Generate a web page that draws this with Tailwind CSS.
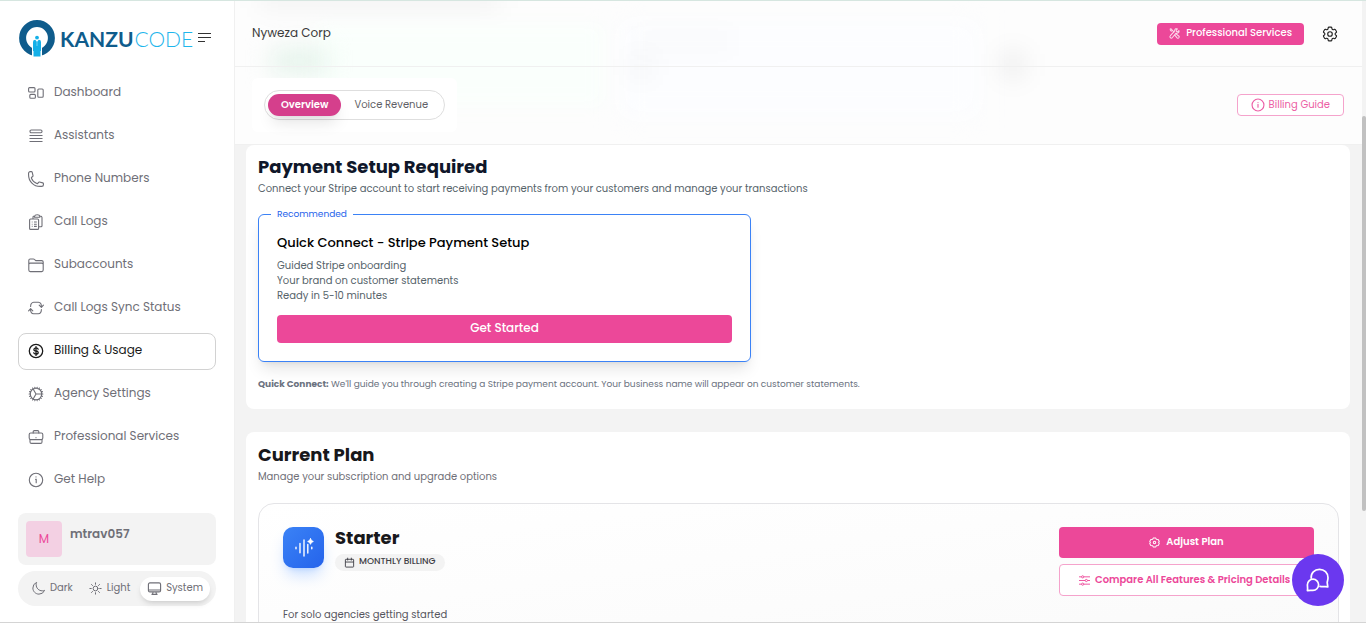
<!DOCTYPE html>
<html lang="en">
<head>
  <meta charset="UTF-8" />
  <meta name="viewport" content="width=device-width, initial-scale=1.0" />
  <title>Billing & Usage - Kanzu Code</title>
  <script src="https://cdn.jsdelivr.net/npm/@tailwindcss/browser@4"></script>
</head>
<body class="h-screen flex overflow-hidden bg-[#f3f3f3] border-t border-t-[#d6e6e0] border-b border-b-[#d4d4d4] font-[Poppins,Inter,sans-serif] text-[#6f6f77]">

  <!-- Sidebar -->
  <aside class="w-[235px] shrink-0 bg-white border-r border-[#f0f0f0] px-[18px] pt-[18px] pb-4 flex flex-col">
    <div class="flex items-center h-[38px] mb-[18px]">
      <a href="#" class="flex items-center" aria-label="Kanzu Code">
        <svg class="w-[38px] h-[38px]" viewBox="0 0 38 38">
          <circle cx="19" cy="19" r="14.4" fill="none" stroke="#0f5c8c" stroke-width="7" />
          <path d="M14 24h10v14H14z" fill="#fff" />
          <circle cx="19" cy="18.6" r="1.9" fill="#14b0e8" />
          <path d="M15 23q0-2.2 2.3-2.2L19 23l1.700-2.200Q23 20.800 23 23v9h-.5v5.500h-7v-5.500H15z" fill="#14b0e8" />
          <path d="M19 23v4" stroke="#fff" stroke-width=".4" />
        </svg>
        <span class="ml-1 font-[Lato,sans-serif] text-[21px] leading-none text-[#0f5c8c] font-bold">KANZU</span>
        <span class="ml-px font-[Lato,sans-serif] text-[21px] leading-none text-[#1fb6ec] font-light">CODE</span>
      </a>
      <button class="ml-auto mr-1 text-[#333]" aria-label="Collapse menu">
        <svg class="w-[14px] h-[12px]" viewBox="0 0 14 12" fill="none" stroke="currentColor" stroke-width="1.200"><path d="M0 1.500h13M0 5.500h13M0 9.500h7" /></svg>
      </button>
    </div>

    <nav class="flex flex-col gap-[6px] text-xs">
      <a href="#" class="h-[37px] flex items-center gap-[10px] px-[10px] pb-[2px]">
        <svg class="w-4 h-4" viewBox="0 0 16 16" fill="none" stroke="currentColor" stroke-width="1.100"><rect x=".6" y="2.600" width="6.400" height="4.400" rx="1" /><rect x="1.800" y="9.400" width="5.600" height="3.800" rx="1" /><rect x="9.800" y="4" width="5.400" height="8.200" rx="1" /></svg>
        <span class="pb-px">Dashboard</span>
      </a>
      <a href="#" class="h-[37px] flex items-center gap-[10px] px-[10px] pb-[2px]">
        <svg class="w-4 h-4" viewBox="0 0 16 16" fill="none" stroke="currentColor" stroke-width="1.100"><rect x="2" y="2" width="12" height="2.800" rx="1.200" /><path d="M1.500 7.500h13M1.500 10.500h13M1.500 13.500h13" /></svg>
        <span class="pb-px">Assistants</span>
      </a>
      <a href="#" class="h-[37px] flex items-center gap-[10px] px-[10px] pb-[2px]">
        <svg class="w-4 h-4" viewBox="1.500 1.500 21 21" fill="none" stroke="currentColor" stroke-width="1.500" stroke-linejoin="round"><path d="M2.250 6.750c0 8.284 6.716 15 15 15h2.250a2.250 2.250 0 0 0 2.250-2.250v-1.372c0-.516-.351-.966-.852-1.091l-4.423-1.106c-.44-.11-.902.055-1.173.417l-.97 1.293c-.282.376-.769.542-1.210.38a12.035 12.035 0 0 1-7.143-7.143c-.162-.441.004-.928.380-1.210l1.293-.97c.363-.271.527-.734.417-1.173L6.963 3.102a1.125 1.125 0 0 0-1.091-.852H4.500A2.250 2.250 0 0 0 2.250 4.500z" /></svg>
        <span class="pb-px">Phone Numbers</span>
      </a>
      <a href="#" class="h-[37px] flex items-center gap-[10px] px-[10px] pb-[2px]">
        <svg class="w-4 h-4" viewBox="0 0 16 16" fill="none" stroke="currentColor" stroke-width="1.100" stroke-linejoin="round"><rect x="1.600" y="5" width="9" height="10.400" rx="1" /><path d="M5 5V3.200Q5 2 6.200 2M12 2q2 0 2 1.400v8.400q0 1-1 1h-2.400M6.500 3.200V2.500Q6.800.7 9.200.7t2.600 1.800v.7zM3.800 8h.7M3.800 10.200h.7M3.800 12.400h.7M6 8h2.800M6 10.200h2.800M6 12.400h2.800" /></svg>
        <span class="pb-px">Call Logs</span>
      </a>
      <a href="#" class="h-[37px] flex items-center gap-[10px] px-[10px] pb-[2px]">
        <svg class="w-4 h-4" viewBox="0 0 16 16" fill="none" stroke="currentColor" stroke-width="1.100" stroke-linejoin="round"><path d="M.8 7.500V3.400Q.8 2 2.200 2h3.200q.6 0 1 .4l1.300 1.200h6q1.500 0 1.500 1.500v8q0 1.500-1.500 1.500H2.300Q.8 14.600.8 13.100V7.500q0-1.400 1.500-1.400h11.400q1.500 0 1.500 1.400" /></svg>
        <span class="pb-px">Subaccounts</span>
      </a>
      <a href="#" class="h-[37px] flex items-center gap-[10px] px-[10px] pb-[2px]">
        <svg class="w-4 h-4" viewBox="0 0 16 16" fill="none" stroke="currentColor" stroke-width="1.100" stroke-linecap="round" stroke-linejoin="round"><path d="M2.600 6.500q0-4 3.200-4.300h4.600q3 .3 3 4v1M11.200 5.200l2.200 2.200 2-2.200M13.400 9.500q0 4-3.200 4.300H5.600q-3-.3-3-4v-1M.6 10.800l2-2.200 2.200 2.200" /></svg>
        <span class="pb-px">Call Logs Sync Status</span>
      </a>
      <a href="#" aria-current="page" class="h-[37px] flex items-center gap-[10px] px-[9px] pb-[2px] border border-[#d2d2d2] rounded-lg text-[#1a1a1a]">
        <svg class="w-4 h-4" viewBox="0 0 16 16" fill="none" stroke="currentColor" stroke-width="1.300" stroke-linecap="round"><circle cx="8" cy="8" r="6.700" /><path d="M8 3.600v8.800M10.200 6.200Q9.700 4.900 8 4.900 5.900 5 5.900 6.500T8 8t2.200 1.500T8 11.100q-1.800 0-2.300-1.300" /></svg>
        <span class="pb-px">Billing &amp; Usage</span>
      </a>
      <a href="#" class="h-[37px] flex items-center gap-[10px] px-[10px] pb-[2px]">
        <svg class="w-4 h-4" viewBox="1.500 1.500 21 21" fill="none" stroke="currentColor" stroke-width="1.500" stroke-linecap="round"><path d="M4.500 12a7.500 7.500 0 0 0 15 0m-15 0a7.500 7.500 0 1 1 15 0m-15 0H3m16.500 0H21m-1.500 0H12m-8.457 3.077 1.410-.513m14.095-5.130 1.410-.513M5.106 17.785l1.150-.964m11.490-9.642 1.149-.964M7.501 19.795l.750-1.300m7.500-12.990.750-1.300m-6.063 16.658.260-1.477m2.605-14.772.260-1.477m0 17.726-.260-1.477M10.698 4.614l-.260-1.477M16.500 19.794l-.750-1.299M7.500 4.205 12 12m6.894 5.785-1.149-.964M6.256 7.178l-1.150-.964m15.352 8.864-1.410-.513M4.954 9.435l-1.410-.514M12.002 12l-3.750 6.495" /></svg>
        <span class="pb-px">Agency Settings</span>
      </a>
      <a href="#" class="h-[37px] flex items-center gap-[10px] px-[10px] pb-[2px]">
        <svg class="w-4 h-4" viewBox="0 0 16 16" fill="none" stroke="currentColor" stroke-width="1.100" stroke-linecap="round" stroke-linejoin="round"><rect x="1.200" y="4" width="13.600" height="6.600" rx="1.500" /><path d="M2 10.500v2.400q0 1.500 1.500 1.500h9q1.500 0 1.500-1.500v-2.400M5.200 4V2.800q0-1.200 1.200-1.200h3.200q1.200 0 1.200 1.200V4M8 8.600v.1" /></svg>
        <span class="pb-px">Professional Services</span>
      </a>
      <a href="#" class="h-[37px] flex items-center gap-[10px] px-[10px] pb-[2px]">
        <svg class="w-4 h-4" viewBox="0 0 16 16" fill="none" stroke="currentColor" stroke-width="1.100" stroke-linecap="round"><circle cx="8" cy="8" r="6.700" /><path d="M7.500 7.200h.7v3.600M8 4.900v.1" /></svg>
        <span class="pb-px">Get Help</span>
      </a>
    </nav>

    <!-- User + theme -->
    <div class="mt-auto flex gap-2 bg-[#f3f3f3] rounded-lg p-2">
      <div class="w-9 h-9 rounded bg-[#f3d0e3] text-[#ec4899] text-xs flex items-center justify-center">M</div>
      <div class="text-xs font-semibold pt-[5px]">mtrav057</div>
    </div>
    <div class="mt-[6px] h-[35px] flex items-center bg-[#f3f3f3] rounded-full pl-[13px] pr-[6px] text-[10px]">
      <button class="flex items-center gap-1">
        <svg class="w-[15px] h-[15px]" viewBox="0 0 24 24" fill="none" stroke="currentColor" stroke-width="1.600" stroke-linejoin="round"><path d="M21.752 15.002A9.720 9.720 0 0 1 18 15.750c-5.385 0-9.750-4.365-9.750-9.750 0-1.330.266-2.597.748-3.752A9.753 9.753 0 0 0 3 11.250C3 16.635 7.365 21 12.750 21a9.753 9.753 0 0 0 9.002-5.998Z" /></svg>
        <span class="pb-[2px]">Dark</span>
      </button>
      <button class="ml-[15px] flex items-center gap-1">
        <svg class="w-[15px] h-[15px]" viewBox="0 0 24 24" fill="none" stroke="currentColor" stroke-width="1.600" stroke-linecap="round"><circle cx="12" cy="12" r="3.800" /><path d="M12 3v2.200M18.400 5.600l-1.600 1.600M21 12h-2.200M18.400 18.400l-1.600-1.600M12 18.800V21M7.200 16.800l-1.600 1.600M5.200 12H3M7.200 7.200 5.600 5.600" /></svg>
        <span class="pb-[2px]">Light</span>
      </button>
      <button class="ml-auto flex items-center gap-1 h-6 px-[7px] bg-white rounded-full shadow-md">
        <svg class="w-[15px] h-[15px]" viewBox="0 0 16 16" fill="none" stroke="currentColor" stroke-width="1.200" stroke-linejoin="round"><rect x="1.500" y="2" width="13" height="9.600" rx="1.600" /><path d="M1.500 9.600h13M6.500 11.800l-.7 2.400h4.400l-.7-2.400M4.800 14.200h6.400" /></svg>
        <span class="pb-[2px]">System</span>
      </button>
    </div>
  </aside>

  <div class="relative flex-1 min-w-0 flex flex-col">
    <!-- Sticky header, scrolled content shows through as a haze -->
    <div class="relative shrink-0 bg-[#fdfdfd] overflow-hidden">
      <div class="absolute inset-0" aria-hidden="true">
        <div class="absolute left-6 -top-4 w-60 h-6 bg-black/4 blur-md"></div>
        <div class="absolute left-20 top-6 w-72 h-20 bg-[#fafffc] blur-sm"></div>
        <div class="absolute left-9 top-12 w-14 h-6 bg-[#e3f3ea] blur-md"></div>
        <div class="absolute left-96 top-5 w-[360px] h-24 bg-[#fcfdff] blur-md"></div>
        <div class="absolute left-[398px] top-14 w-4 h-5 bg-black/5 blur-md"></div>
        <div class="absolute left-[402px] top-8 w-24 h-4 bg-black/2 blur-md"></div>
        <div class="absolute left-[768px] top-13 w-5 h-6 bg-black/8 blur-md"></div>
      </div>
      <header class="relative h-[66px] flex items-center justify-between pl-[17px] pr-7 border-b border-[#f0f0f0]">
        <span class="pb-px text-xs text-[#3a3a3a]">Nyweza Corp</span>
        <div class="flex items-center gap-[18px]">
          <button class="h-[22px] px-3 flex items-center gap-[6px] rounded bg-[#ec4899] text-white text-[10px] font-medium">
            <svg class="w-[11px] h-[11px] opacity-80" viewBox="0 0 12 12" fill="none" stroke="currentColor" stroke-width="1.100" stroke-linejoin="round"><path d="M1 1.400 2.200.8l1.800 2 1.800 2M5.800 7.200l3 3.500q1.200 1 2-.1t-.2-1.900L7.300 6.200M11 2.700 9.600 4 8 3.900l-.1-1.700L9.200 1Q7 .2 6.300 2.200q-.1 1-.5 1.500L1.500 8.400q-1 1.200 0 2.200t2.200-.2l4-4.800q3.600.5 3.300-2.900M1 1.400q.8 2 2.300 2.100" /></svg>
            <span class="pb-[2px]">Professional Services</span>
          </button>
          <button class="text-[#222]" aria-label="Settings">
            <svg class="w-4 h-4" viewBox="1.500 1.500 21 21" fill="none" stroke="currentColor" stroke-width="1.500" stroke-linejoin="round"><path d="M9.594 3.940c.090-.542.560-.940 1.110-.940h2.593c.550 0 1.020.398 1.110.940l.213 1.281c.063.374.313.686.645.870.074.040.147.083.220.127.325.196.720.257 1.075.124l1.217-.456a1.125 1.125 0 0 1 1.370.490l1.296 2.247a1.125 1.125 0 0 1-.260 1.431l-1.003.827c-.293.241-.438.613-.430.992a7.723 7.723 0 0 1 0 .255c-.008.378.137.750.430.991l1.004.827c.424.350.534.955.260 1.430l-1.298 2.247a1.125 1.125 0 0 1-1.369.491l-1.217-.456c-.355-.133-.750-.072-1.076.124a6.470 6.470 0 0 1-.220.128c-.331.183-.581.495-.644.869l-.213 1.281c-.090.543-.560.940-1.110.940h-2.594c-.550 0-1.019-.398-1.110-.940l-.213-1.281c-.062-.374-.312-.686-.644-.870a6.520 6.520 0 0 1-.220-.127c-.325-.196-.720-.257-1.076-.124l-1.217.456a1.125 1.125 0 0 1-1.369-.490l-1.297-2.247a1.125 1.125 0 0 1 .260-1.431l1.004-.827c.292-.240.437-.613.430-.991a6.932 6.932 0 0 1 0-.255c.007-.380-.138-.751-.430-.992l-1.004-.827a1.125 1.125 0 0 1-.260-1.430l1.297-2.247a1.125 1.125 0 0 1 1.370-.491l1.216.456c.356.133.751.072 1.076-.124.072-.044.146-.086.220-.128.332-.183.582-.495.644-.869z" /><circle cx="12" cy="12" r="3" /></svg>
          </button>
        </div>
      </header>
      <div class="relative h-[78px] flex items-center justify-between pl-[17px] pr-[18px] pb-px border-b border-[#f0f0f0]">
        <div class="bg-white rounded-md p-3">
          <div class="h-[30px] flex items-center p-[3px] border border-[#dedede] rounded-full text-[10px]">
            <button class="h-[22px] px-[13px] pb-px rounded-full bg-[#d53f8c] text-white font-semibold shadow-lg">Overview</button>
            <button class="h-[22px] px-[13px] pb-px text-[#5f5f66]">Voice Revenue</button>
          </div>
        </div>
        <button class="mr-1 h-[22px] px-[13px] flex items-center gap-1 rounded border border-[#f5a3cc] bg-white text-[#ec5fa5] text-[10px]">
          <svg class="w-[14px] h-[14px]" viewBox="0 0 16 16" fill="none" stroke="currentColor" stroke-width="1.300" stroke-linecap="round"><circle cx="8" cy="8" r="6.800" /><path d="M8 7.200v3.400M8 5.100v.1" /></svg>
          <span class="pb-px">Billing Guide</span>
        </button>
      </div>
    </div>

    <main class="flex-1 min-h-0 overflow-hidden pl-[11px] pr-4">
      <section class="bg-white rounded-lg pl-3 pr-[11px] pt-[10px] pb-[18px]">
        <h2 class="text-lg leading-6 font-bold text-[#0f172a]">Payment Setup Required</h2>
        <p class="mt-[2px] text-[10px] leading-4 text-[#56636a]">Connect your Stripe account to start receiving payments from your customers and manage your transactions</p>

        <fieldset class="mt-[10px] max-w-[493px] border border-[#3b82f6] rounded-md px-[18px] pb-[18px] shadow-lg">
          <legend class="-ml-[6px] px-[6px] text-[9px] leading-[14px] text-[#2563eb]">Recommended</legend>
          <h3 class="mt-3 text-[13px] leading-5 font-medium text-black">Quick Connect - Stripe Payment Setup</h3>
          <ul class="mt-[5px] text-[10px] leading-[15px] text-[#56636a]">
            <li>Guided Stripe onboarding</li>
            <li>Your brand on customer statements</li>
            <li>Ready in 5-10 minutes</li>
          </ul>
          <button class="mt-3 w-full h-7 pb-[2px] rounded bg-[#ec4899] text-white text-xs font-medium">Get Started</button>
        </fieldset>

        <p class="mt-[15px] text-[9px] leading-[14px] text-[#6b7280]"><b class="font-bold">Quick Connect:</b> We'll guide you through creating a Stripe payment account. Your business name will appear on customer statements.</p>
      </section>

      <section class="mt-[23px] bg-white rounded-lg pl-3 pr-[11px] pt-[11px] pb-4">
        <h2 class="text-lg leading-6 font-bold text-[#18181b]">Current Plan</h2>
        <p class="mt-[2px] text-[10px] leading-4 text-[#6f6f77]">Manage your subscription and upgrade options</p>

        <div class="mt-[18px] border border-[#e4e4e7] rounded-2xl bg-linear-to-br from-white to-[#fafafa] p-6 pt-[23px]">
          <div class="flex justify-between items-start">
            <div class="flex gap-[11px]">
              <div class="w-[41px] h-[41px] rounded-[10px] bg-linear-to-br from-[#3b82f6] to-[#2563eb] shadow-lg shadow-blue-500/25 flex items-center justify-center">
                <svg class="w-5 h-5" viewBox="0 0 20 20" fill="none" stroke="#fff" stroke-width="1.400" stroke-linecap="round"><path d="M2 9.200v1.600M6 5.400v9.400M10 2v16M13.800 6.500v8.500M17.800 9.200v1.600" /><path d="M16.500.8q.4 2.300 2.800 2.700-2.400.4-2.800 2.800-.4-2.400-2.800-2.800 2.400-.4 2.800-2.700z" fill="#fff" stroke-width="1" /></svg>
              </div>
              <div>
                <h3 class="text-lg leading-[22px] font-bold text-[#18181b]">Starter</h3>
                <div class="mt-[5px] h-[17px] px-[9px] flex items-center gap-1 rounded-full bg-[#f3f3f3] text-[#3f3f46] text-[9px] font-medium">
                  <svg class="w-[11px] h-[11px]" viewBox="0 0 12 12" fill="none" stroke="currentColor"><rect x="1.500" y="2.500" width="9" height="8.500" rx=".6" /><path d="M1.500 5.500h9M4 .8v3M8 .8v3" /></svg>
                  <span class="pb-px">MONTHLY BILLING</span>
                </div>
              </div>
            </div>
            <div class="w-[255px] flex flex-col gap-[6px] text-[10px] font-semibold">
              <button class="h-[31px] flex items-center justify-center gap-[6px] rounded bg-[#ec4899] text-white">
                <svg class="w-[11px] h-[11px]" viewBox="0 0 12 12" fill="none" stroke="currentColor" stroke-width="1.100" stroke-linejoin="round"><path d="M4.600 1.200h2.800l.6 1.300 2 .1 1.200 2.200L10.500 6l.7 1.200L10 9.400l-2 .1-.6 1.300H4.600L4 9.500l-2-.1L.8 7.200 1.500 6 .8 4.800 2 2.600l2-.1z" /><circle cx="6" cy="6" r="1.300" /></svg>
                <span class="pb-[2px]">Adjust Plan</span>
              </button>
              <button class="h-8 flex items-center pl-[19px] gap-[5px] whitespace-nowrap rounded border border-[#f5a3cc] bg-white text-[#ec4899]">
                <svg class="w-[11px] h-[11px]" viewBox="0 0 12 12" fill="none" stroke="currentColor"><path d="M0 2h2.800M5.200 2H12M0 6h6.800M9.200 6H12M0 10h2.800M5.200 10H12" /><circle cx="4" cy="2" r="1.200" /><circle cx="8" cy="6" r="1.200" /><circle cx="4" cy="10" r="1.200" /></svg>
                <span class="pb-[2px]">Compare All Features &amp; Pricing Details</span>
              </button>
            </div>
          </div>
          <p class="mt-[11px] text-[10px] leading-4 text-[#56565e]">For solo agencies getting started</p>
        </div>
      </section>
    </main>

    <!-- Scrollbar -->
    <div class="absolute inset-y-0 right-0 w-1 bg-[#f3f3f3]">
      <div class="mt-[115px] h-[395px] rounded-sm bg-[#c1c1c1]"></div>
    </div>
  </div>

  <!-- Chat launcher -->
  <button class="fixed right-[22px] bottom-[17px] w-[52px] h-[52px] rounded-full bg-[#6b38ef] text-white flex items-center justify-center" aria-label="Open chat">
    <svg class="w-6 h-6" viewBox="0 0 24 24" fill="none" stroke="currentColor" stroke-width="1.700" stroke-linejoin="round" stroke-linecap="round"><path d="M5.200 10.200C4.700 5 8.500 1.300 13.500 1.300c4.800 0 8.500 3.600 8.500 8.500 0 2.200-.8 3.600-.8 4.800l.6 4.200c-2.600-.5-5 .2-7.800-.4" /><path d="M7 11.200a5.600 5.600 0 1 1 0 11.200c-1.800 0-3.700-.2-5.600.2.500-2 0-3.800 0-5.800A5.600 5.600 0 0 1 7 11.200" /></svg>
  </button>

</body>
</html>
